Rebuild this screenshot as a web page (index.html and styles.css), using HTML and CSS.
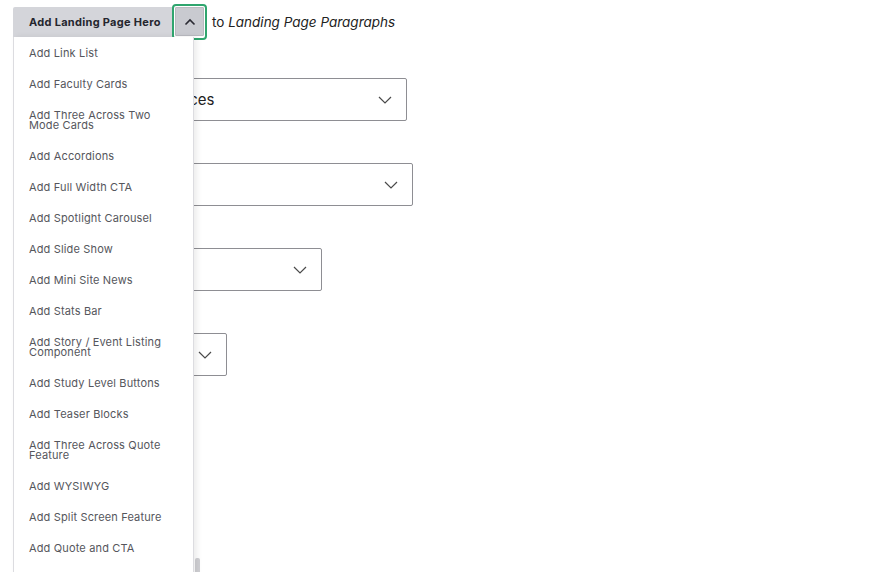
FILE: index.html
```html
<!DOCTYPE html>
<html lang="en">
<head>
<meta charset="utf-8">
<title>Landing Page Paragraphs</title>
<link rel="stylesheet" href="styles.css">
</head>
<body>
<div class="page">
  <div class="add-row">
    <div class="dropbutton">
      <button class="dropbutton-main" type="button">Add Landing Page Hero</button>
      <button class="dropbutton-toggle" type="button" aria-label="List additional actions">
        <svg width="12" height="8" viewBox="0 0 12 8"><path d="M1.5 6.5 L6 2 L10.5 6.5" fill="none" stroke="#2a2a33" stroke-width="1.6"/></svg>
      </button>
      <ul class="dropmenu">
        <li>Add Link List</li>
        <li>Add Faculty Cards</li>
        <li>Add Three Across Two Mode Cards</li>
        <li>Add Accordions</li>
        <li>Add Full Width CTA</li>
        <li>Add Spotlight Carousel</li>
        <li>Add Slide Show</li>
        <li>Add Mini Site News</li>
        <li>Add Stats Bar</li>
        <li>Add Story / Event Listing Component</li>
        <li>Add Study Level Buttons</li>
        <li>Add Teaser Blocks</li>
        <li>Add Three Across Quote Feature</li>
        <li>Add WYSIWYG</li>
        <li>Add Split Screen Feature</li>
        <li>Add Quote and CTA</li>
      </ul>
    </div>
    <span class="to-text">to <em>Landing Page Paragraphs</em></span>
  </div>

  <div class="fields">
    <div class="select w1"><span class="select-value">Academic Support Services</span>
      <svg class="chev" width="14" height="8" viewBox="0 0 14 8"><path d="M1 1 L7 7 L13 1" fill="none" stroke="#4a4a4a" stroke-width="1.2"/></svg></div>
    <div class="select w2"><span class="select-value"></span>
      <svg class="chev" width="14" height="8" viewBox="0 0 14 8"><path d="M1 1 L7 7 L13 1" fill="none" stroke="#4a4a4a" stroke-width="1.2"/></svg></div>
    <div class="select w3"><span class="select-value"></span>
      <svg class="chev" width="14" height="8" viewBox="0 0 14 8"><path d="M1 1 L7 7 L13 1" fill="none" stroke="#4a4a4a" stroke-width="1.2"/></svg></div>
    <div class="select w4"><span class="select-value"></span>
      <svg class="chev" width="14" height="8" viewBox="0 0 14 8"><path d="M1 1 L7 7 L13 1" fill="none" stroke="#4a4a4a" stroke-width="1.2"/></svg></div>
  </div>
  <div class="scroll-thumb"></div>
</div>
</body>
</html>
```

FILE: styles.css
```css
html, body {
  margin: 0;
  padding: 0;
  background: #ffffff;
  overflow: hidden;
}

body {
  font-family: "Inter", "Liberation Sans", sans-serif;
  color: #232429;
}

.page {
  position: relative;
  width: 881px;
  height: 572px;
  padding: 4px 0 0 13px;
  box-sizing: border-box;
}

.add-row {
  display: flex;
  align-items: center;
  height: 36px;
}

.dropbutton {
  position: relative;
  display: flex;
  align-items: center;
}

.dropbutton-main {
  height: 30px;
  width: 159px;
  margin: 0;
  padding: 0 0 0 16px;
  border: none;
  border-radius: 2px 0 0 0;
  background: #d4d5da;
  font-family: inherit;
  font-size: 11px;
  font-weight: 700;
  color: #25262e;
  text-align: left;
  letter-spacing: 0.3px;
}

.dropbutton-toggle {
  width: 35px;
  height: 36px;
  margin: 0;
  padding: 0;
  border: 2px solid #2fa56e;
  border-radius: 4px;
  background: #ffffff;
  display: flex;
  align-items: center;
  justify-content: center;
  box-sizing: border-box;
  position: relative;
}

.dropbutton-toggle::before {
  content: "";
  position: absolute;
  left: 1px;
  top: 1px;
  right: 1px;
  bottom: 2px;
  background: #c9cad0;
  border: 1px solid #b9bac0;
  border-radius: 1px;
}

.dropbutton-toggle svg {
  position: relative;
}

.to-text {
  margin-left: 5px;
  font-size: 13.5px;
  color: #222;
}

.to-text em {
  font-style: italic;
}

.dropmenu {
  position: absolute;
  left: 0;
  top: 33px;
  width: 181px;
  height: 560px;
  margin: 0;
  padding: 0;
  list-style: none;
  background: #ffffff;
  border-left: 1px solid #dcdce0;
  border-right: 1px solid #dcdce0;
  box-shadow: 3px 0 6px rgba(0, 0, 0, 0.08);
  box-sizing: border-box;
  z-index: 5;
}

.dropmenu li {
  padding: 11px 20px 10px 15px;
  font-size: 11px;
  line-height: 10px;
  letter-spacing: 0.15px;
  color: #55565c;
}

.fields {
  display: flex;
  flex-direction: column;
  gap: 42px;
  padding-top: 38px;
}

.select {
  height: 43px;
  border: 1px solid #8e8e93;
  border-radius: 2px;
  box-sizing: border-box;
  display: flex;
  align-items: center;
  justify-content: space-between;
  padding: 0 14px 0 3px;
}

.select-value {
  font-size: 15px;
  color: #222;
  white-space: nowrap;
}

.w1 { width: 394px; }
.w2 { width: 400px; }
.w3 { width: 309px; }
.w4 { width: 214px; }

.scroll-thumb {
  position: absolute;
  left: 195px;
  top: 558px;
  width: 5px;
  height: 20px;
  background: #cfcfd3;
  border-radius: 2px;
}
```
